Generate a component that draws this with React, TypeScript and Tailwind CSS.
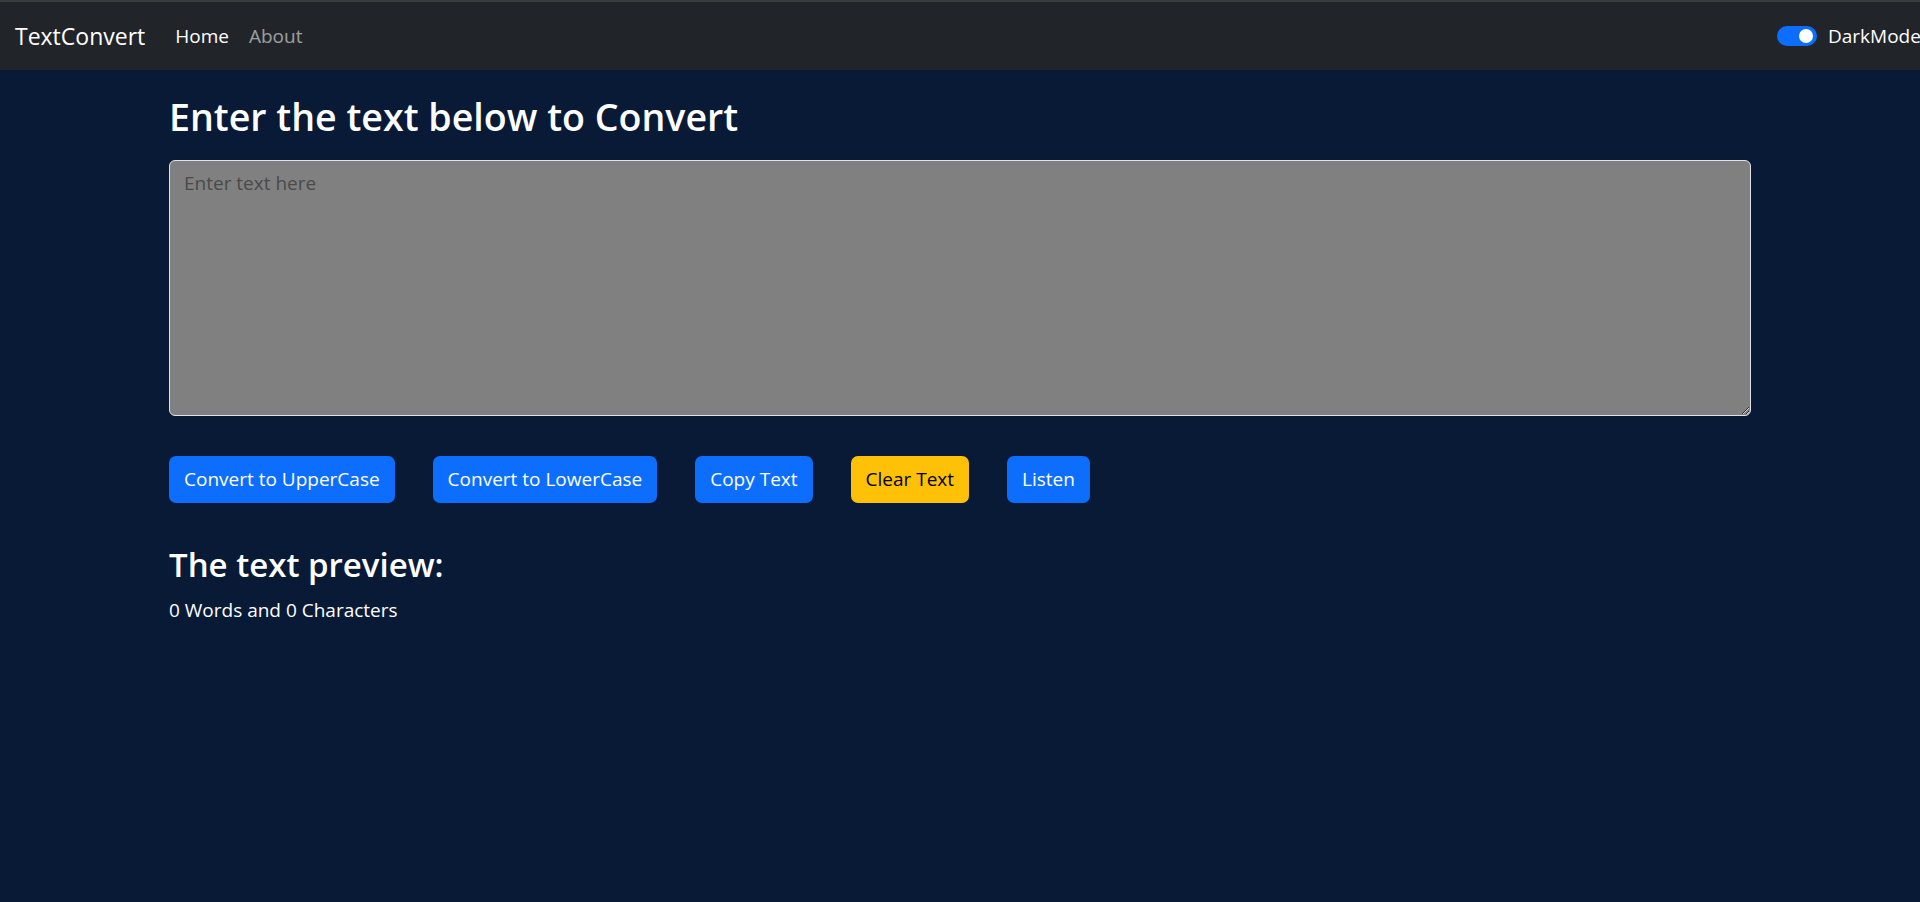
import { useState } from "react";

const FONT = "font-['Open_Sans',_'Liberation_Sans',_sans-serif]";

function Toggle({ on, onToggle }: { on: boolean; onToggle: () => void }) {
  return (
    <button
      type="button"
      onClick={onToggle}
      className={`relative h-[20px] w-[40px] rounded-full ${
        on ? "bg-[#0d6efd]" : "bg-[#6c757d]"
      }`}
    >
      <span
        className={`absolute top-[3px] h-[14px] w-[14px] rounded-full bg-white ${
          on ? "right-[4px]" : "left-[4px]"
        }`}
      />
    </button>
  );
}

function ActionButton({
  label,
  variant = "primary",
}: {
  label: string;
  variant?: "primary" | "warning";
}) {
  const colors =
    variant === "warning"
      ? "bg-[#ffc107] text-black"
      : "bg-[#0d6efd] text-white";
  return (
    <button
      type="button"
      className={`h-[47px] rounded-[7px] px-[15px] text-[19px] ${colors}`}
    >
      {label}
    </button>
  );
}

export default function App() {
  const [dark, setDark] = useState(true);
  const [text, setText] = useState("");

  const words = text.split(/\s+/).filter((w) => w.length > 0).length;

  return (
    <div className={`min-h-[902px] bg-[#091a37] ${FONT}`}>
      {/* Navbar */}
      <nav className="flex h-[70px] items-center border-t-2 border-[#3a3b3d] bg-[#212529] pl-[15px]">
        <span className="text-[23px] text-white">TextConvert</span>
        <div className="ml-[30px] flex gap-[20px] text-[19px]">
          <a className="text-white">Home</a>
          <a className="text-white/55">About</a>
        </div>
        <div className="ml-auto flex items-center gap-[11px]">
          <Toggle on={dark} onToggle={() => setDark(!dark)} />
          <span className="w-[92px] overflow-hidden whitespace-nowrap text-[19px] text-white">
            DarkMode
          </span>
        </div>
      </nav>

      {/* Main */}
      <main className="mx-auto w-[1582px] pt-[24px]">
        <h1 className="text-[37.6px] font-semibold leading-[1.2] text-white">
          Enter the text below to Convert
        </h1>
        <textarea
          value={text}
          onChange={(e) => setText(e.target.value)}
          placeholder="Enter text here"
          className="mt-[21px] block h-[256px] w-full rounded-[6px] border border-[#dee2e6] bg-[#808080] px-[14px] py-[8px] text-[19px] text-black outline-none placeholder:text-[#4a4a4a]"
        />
        <div className="mt-[40px] flex gap-[38px]">
          <ActionButton label="Convert to UpperCase" />
          <ActionButton label="Convert to LowerCase" />
          <ActionButton label="Copy Text" />
          <ActionButton label="Clear Text" variant="warning" />
          <ActionButton label="Listen" />
        </div>
        <h2 className="mt-[42px] text-[33px] font-semibold leading-[1.2] text-white">
          The text preview:
        </h2>
        <p className="mt-[11px] text-[19px] text-white">
          {words} Words and {text.length} Characters
        </p>
      </main>
    </div>
  );
}
